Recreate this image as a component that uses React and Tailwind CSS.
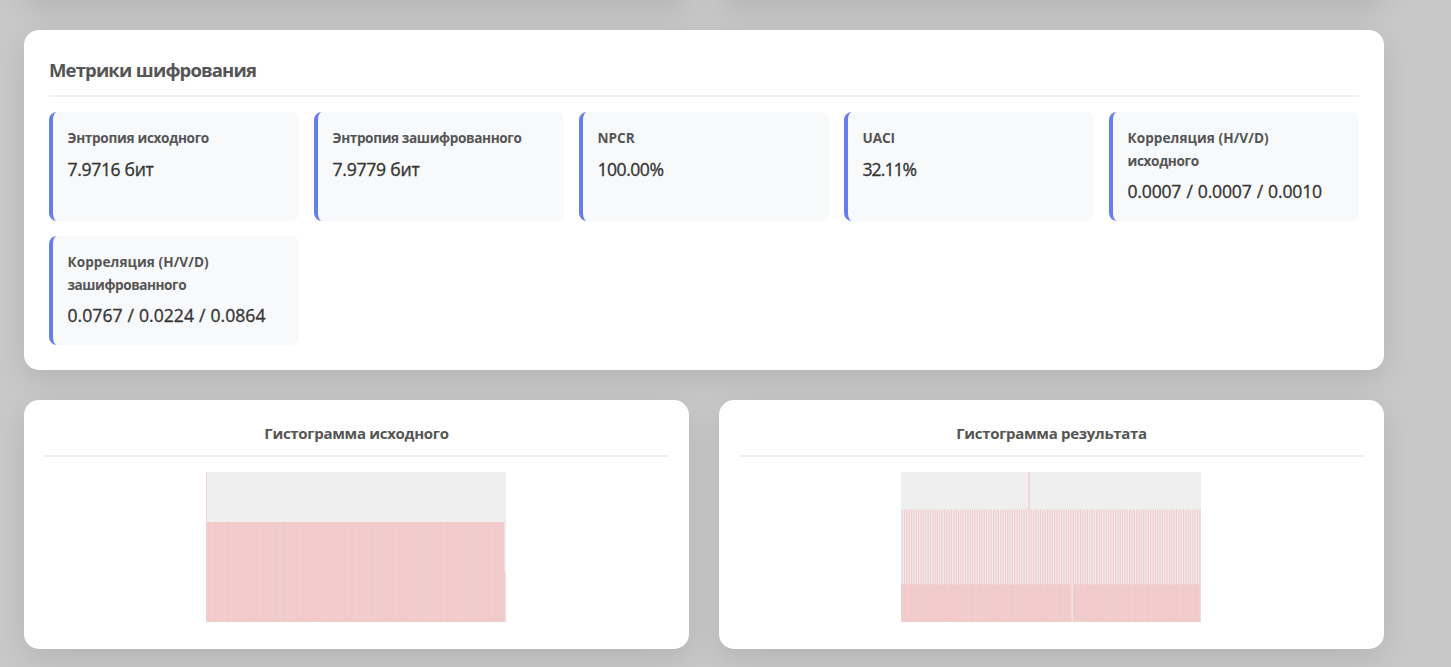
const metrics = [
  { label: 'Энтропия исходного', value: '7.9716 бит', labelStyle: 'tracking-[-0.32px]', valueStyle: 'tracking-[-0.35px]' },
  { label: 'Энтропия зашифрованного', value: '7.9779 бит', labelStyle: 'tracking-[-0.38px]', valueStyle: 'tracking-[-0.25px]' },
  { label: 'NPCR', value: '100.00%', labelStyle: '', valueStyle: 'tracking-[-0.5px]' },
  { label: 'UACI', value: '32.11%', labelStyle: 'tracking-[-0.1px]', valueStyle: 'tracking-[-0.95px]' },
  { label: 'Корреляция (H/V/D)\nисходного', value: '0.0007 / 0.0007 / 0.0010', labelStyle: 'tracking-[0.06px] [&>span+span]:tracking-[-0.35px]', valueStyle: 'tracking-[-0.2px] [word-spacing:0.8px]' },
  { label: 'Корреляция (H/V/D)\nзашифрованного', value: '0.0767 / 0.0224 / 0.0864', labelStyle: 'tracking-[0.06px] [&>span+span]:tracking-[-0.45px]', valueStyle: 'tracking-[0.02px] [word-spacing:0.4px]' },
];

const step = 300 / 256;
const source = Array.from({ length: 256 }, (_, i) => (i === 0 ? 150 : i === 255 ? 50 : 100));
const result = Array.from({ length: 256 }, (_, i) =>
  i === 109 ? 150 : i === 146 ? 0 : i % 2 ? 112.5 : 37.5
);

function Histogram({ bars }) {
  return (
    <svg className="ml-[162px] block bg-[#efefef]" width="300" height="150">
      {/* Fill shared by neighbouring bars, so their seams stay faint */}
      {bars.slice(1).map((h, i) => {
        const shared = Math.min(h, bars[i]);
        return <rect key={i} x={i * step} y={150 - shared} width={step} height={shared} fill="#e6dad2" />;
      })}
      {bars.map((h, i) => (
        <rect key={i} x={i * step - 0.5} y={150 - h} width={step} height={h} fill="#f3c9cb" />
      ))}
    </svg>
  );
}

function ChartCard({ title, bars }) {
  return (
    <section className="h-[249px] rounded-[15px] bg-white p-5 shadow-[0_10px_30px_rgba(0,0,0,0.1)]">
      <h3 className="mb-[15px] h-[37px] border-b-2 border-[#f0f0f0] text-center text-[15px] leading-[26px] font-bold tracking-[-0.3px] text-[#555]">
        {title}
      </h3>
      <Histogram bars={bars} />
    </section>
  );
}

export default function App() {
  return (
    <main className="h-[667px] overflow-hidden bg-[#c8c8c8] pl-6 font-['Open_Sans','Noto_Sans',sans-serif]">
      <div className="flex w-[1360px] flex-col gap-[30px]">
        <div className="-mt-[100px] grid h-[100px] grid-cols-2 gap-[30px]">
          <div className="rounded-[15px] bg-white shadow-[0_10px_30px_rgba(0,0,0,0.1)]" />
          <div className="rounded-[15px] bg-white shadow-[0_10px_30px_rgba(0,0,0,0.1)]" />
        </div>
        <section className="h-[340px] rounded-[15px] bg-white p-[25px] shadow-[0_10px_30px_rgba(0,0,0,0.1)]">
          <h2 className="mb-[15px] h-[42px] border-b-2 border-[#f0f0f0] text-[18.5px] leading-[30px] font-bold tracking-[-0.86px] [word-spacing:0.5px] text-[#555]">
            Метрики шифрования
          </h2>
          <div className="grid auto-rows-[109px] grid-cols-5 gap-[15px]">
            {metrics.map(({ label, value, labelStyle, valueStyle }) => (
              <div key={label} className="rounded-lg border-l-4 border-[#667eea] bg-[#f8f9fb] py-[15px] pr-[15px] pl-[14.5px]">
                <div className={`text-[13.6px] leading-[22.5px] font-bold text-[#555] ${labelStyle}`}>
                  {label.split('\n').map((line) => (
                    <span key={line} className="block whitespace-nowrap">{line}</span>
                  ))}
                </div>
                <div className={`mt-[5px] text-[17.6px] leading-[28px] whitespace-nowrap text-[#333] [-webkit-text-stroke:0.3px_#333] ${valueStyle}`}>{value}</div>
              </div>
            ))}
          </div>
        </section>
        <div className="grid grid-cols-2 gap-[30px]">
          <ChartCard title="Гистограмма исходного" bars={source} />
          <ChartCard title="Гистограмма результата" bars={result} />
        </div>
      </div>
    </main>
  );
}
